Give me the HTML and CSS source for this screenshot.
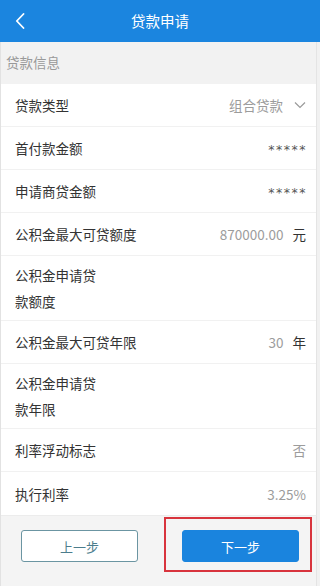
FILE: index.html
```html
<!DOCTYPE html>
<html lang="zh">
<head>
<meta charset="utf-8">
<link rel="stylesheet" href="styles.css">
</head>
<body>
<div class="app">
  <header class="topbar">
    <span class="back">
      <svg width="10" height="16" viewBox="0 0 10 16"><path d="M8.5 1 L1.8 8 L8.5 15" fill="none" stroke="#fff" stroke-width="1.8" stroke-linecap="round" stroke-linejoin="round"/></svg>
    </span>
    <h1 class="title">贷款申请</h1>
  </header>
  <div class="section">贷款信息</div>
  <ul class="list">
    <li class="row"><span class="label">贷款类型</span><span class="value">组合贷款<svg class="chev" width="12" height="8" viewBox="0 0 12 8"><path d="M1 1.5 L6 6.5 L11 1.5" fill="none" stroke="#9a9a9a" stroke-width="1.2"/></svg></span></li>
    <li class="row"><span class="label">首付款金额</span><span class="value stars">*****</span></li>
    <li class="row"><span class="label">申请商贷金额</span><span class="value stars">*****</span></li>
    <li class="row"><span class="label">公积金最大可贷额度</span><span class="value">870000.00<span class="unit">元</span></span></li>
    <li class="row tall"><span class="label narrow">公积金申请贷款额度</span><span class="value"></span></li>
    <li class="row"><span class="label">公积金最大可贷年限</span><span class="value">30<span class="unit">年</span></span></li>
    <li class="row tall"><span class="label narrow">公积金申请贷款年限</span><span class="value"></span></li>
    <li class="row"><span class="label">利率浮动标志</span><span class="value">否</span></li>
    <li class="row"><span class="label">执行利率</span><span class="value">3.25%</span></li>
  </ul>
  <footer class="footer">
    <button class="btn prev">上一步</button>
    <button class="btn next">下一步</button>
    <div class="highlight"></div>
  </footer>
</div>
</body>
</html>
```
FILE: styles.css
```css
* { box-sizing: border-box; }
html, body { margin: 0; padding: 0; }
body {
  width: 320px;
  height: 586px;
  overflow: hidden;
  background: #f4f4f4;
  font-family: "Noto Sans CJK SC", "Noto Sans", sans-serif;
  color: #333;
}
.app {
  width: 320px;
  height: 586px;
  display: flex;
  flex-direction: column;
  border-left: 1px solid #e2e2e2;
  border-right: 3px solid #f1f1f1;
}
.topbar {
  flex: none;
  height: 42px;
  background: #1b85df;
  display: flex;
  align-items: center;
  justify-content: center;
  position: relative;
  margin-left: -1px;
  margin-right: -3px;
}
.back {
  position: absolute;
  left: 15px;
  top: 13px;
  width: 10px;
  height: 16px;
  display: flex;
}
.title {
  margin: 0;
  font-size: 14.5px;
  font-weight: 400;
  color: #fff;
  line-height: 20px;
}
.section {
  flex: none;
  height: 42px;
  line-height: 40px;
  padding-left: 5px;
  font-size: 13.5px;
  color: #999;
  background: #f2f2f2;
  border-right: 1px solid #e4e4e4;
}
.list {
  flex: none;
  list-style: none;
  margin: 0;
  padding: 0;
  background: #fff;
  border-right: 1px solid #e4e4e4;
}
.row {
  display: flex;
  align-items: center;
  justify-content: space-between;
  height: 43px;
  padding: 0 10px 0 14px;
  line-height: 26px;
  font-size: 13.5px;
  border-bottom: 1px solid #f1f1f1;
}
.row:last-child { border-bottom: none; }
.row.tall { height: 65px; }
.label { color: #333; }
.label.narrow { width: 84px; }
.value {
  color: #9c9c9c;
  display: flex;
  align-items: center;
}
.stars {
  letter-spacing: 1.5px;
  font-size: 12.5px;
  color: #555;
  font-family: "DejaVu Sans", sans-serif;
  padding-top: 4px;
  margin-right: -1px;
}
.unit {
  color: #333;
  margin-left: 9px;
}
.chev { margin-left: 11px; margin-right: 0; }
.footer {
  flex: 1;
  background: #f4f4f4;
  position: relative;
  display: flex;
  align-items: flex-start;
  gap: 44px;
  padding: 14px 0 0 20px;
  border-right: 1px solid #e4e4e4;
  border-top: 1px solid #ececec;
}
.btn {
  width: 117px;
  height: 32px;
  border-radius: 3px;
  font-family: "Noto Sans CJK SC", sans-serif;
  font-size: 13px;
  padding: 0;
  cursor: pointer;
}
.prev {
  background: #fff;
  border: 1px solid #6b95a2;
  color: #4c7d8d;
}
.next {
  background: #1a84de;
  border: 1px solid #1a84de;
  color: #fff;
}
.highlight {
  position: absolute;
  left: 163px;
  top: 1px;
  width: 148px;
  height: 55px;
  border: 2px solid #d8343d;
}
```
